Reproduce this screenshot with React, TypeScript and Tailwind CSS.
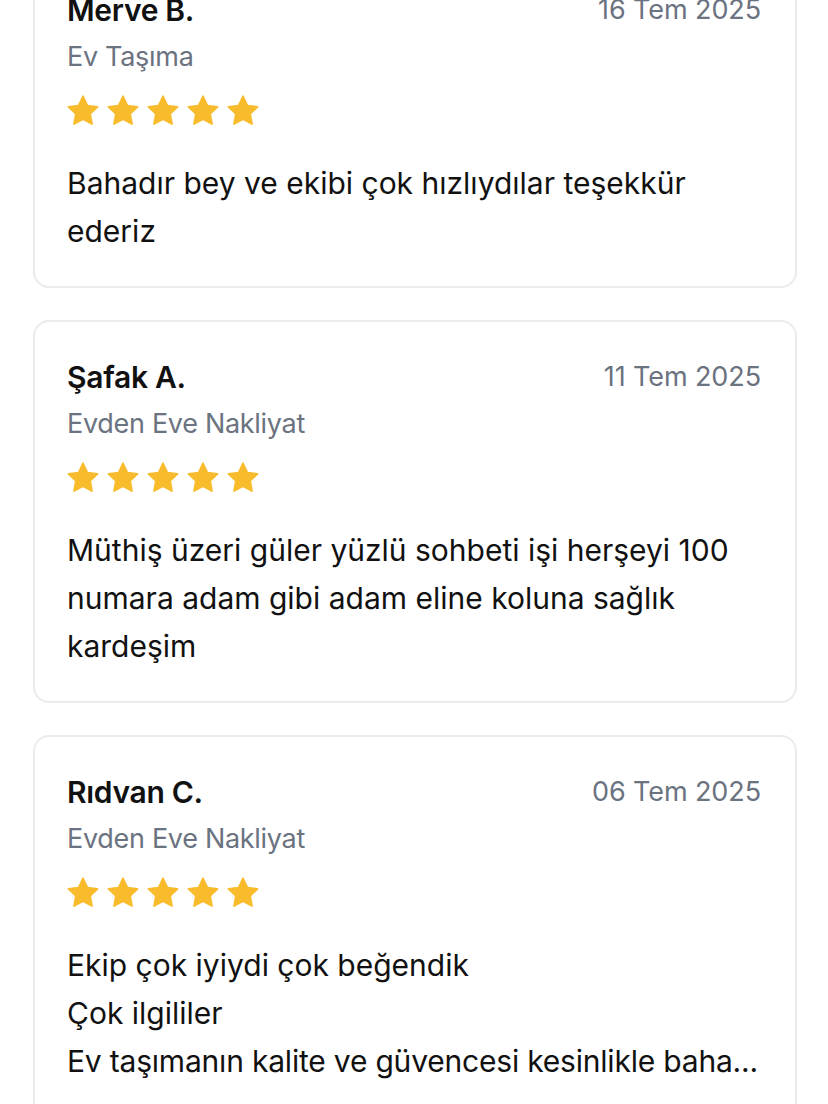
import React from "react";

const reviews = [
  {
    name: "Merve B.",
    date: "16 Tem 2025",
    category: "Ev Taşıma",
    lines: ["Bahadır bey ve ekibi çok hızlıydılar teşekkür ederiz"],
  },
  {
    name: "Şafak A.",
    date: "11 Tem 2025",
    category: "Evden Eve Nakliyat",
    lines: ["Müthiş üzeri güler yüzlü sohbeti işi herşeyi 100 numara adam gibi adam eline koluna sağlık kardeşim"],
  },
  {
    name: "Rıdvan C.",
    date: "06 Tem 2025",
    category: "Evden Eve Nakliyat",
    lines: ["Ekip çok iyiydi çok beğendik", "Çok ilgililer", "Ev taşımanın kalite ve güvencesi kesinlikle baha..."],
    more: true,
  },
];

function Star() {
  return (
    <svg width="36" height="36" viewBox="0 0 24 24" fill="#f8bb2c" stroke="#f8bb2c" strokeWidth="1.2" strokeLinejoin="round">
      <path d="M12 2.2l2.95 6.2 6.75.85-4.95 4.7 1.25 6.75L12 17.4l-6 3.3 1.25-6.75L2.3 9.25l6.75-.85z" />
    </svg>
  );
}

export default function App() {
  return (
    <div className="min-h-screen bg-white overflow-hidden" style={{ fontFamily: "Inter, 'Noto Sans', sans-serif" }}>
      <div className="flex flex-col gap-8 pl-[33px] pr-[31px] -mt-[47px]">
        {reviews.map((r) => (
          <div key={r.name} className="rounded-2xl border-2 border-[#ebebeb] bg-white pl-8 pr-[34px] pt-[34px] pb-[31px]">
            <div className="flex items-center justify-between h-[42px]">
              <span className="text-[30px] font-semibold text-[#111111] tracking-[-0.3px]">{r.name}</span>
              <span className="text-[27px] text-[#6b7280] tracking-[-0.1px]">{r.date}</span>
            </div>
            <div className="mt-[7px] h-[38px] leading-[38px] text-[27px] text-[#6b7280] tracking-[-0.3px]">{r.category}</div>
            <div className="mt-[17px] -ml-[2px] flex gap-1">
              {[0, 1, 2, 3, 4].map((i) => (
                <Star key={i} />
              ))}
            </div>
            <div className="mt-[30px] text-[30px] leading-[48px] text-[#111111]">
              {r.lines.map((l, i) => (
                <div key={i} className={i === 2 ? "whitespace-nowrap tracking-[-0.2px]" : ""}>
                  {l}
                </div>
              ))}
            </div>
            {r.more && <div className="mt-4 text-[27px] leading-[40px] text-[#6b7280]">Devamını Oku</div>}
          </div>
        ))}
      </div>
    </div>
  );
}
